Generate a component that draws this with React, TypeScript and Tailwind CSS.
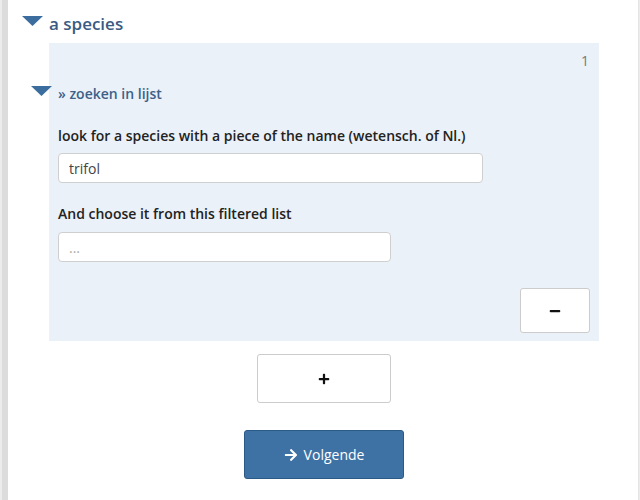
import { FaArrowRight, FaMinus, FaPlus } from "react-icons/fa"

const font = { fontFamily: '"Open Sans", "Liberation Sans", sans-serif' }

function Caret({ className }: { className: string }) {
  return (
    <svg viewBox="0 0 21 10" className={className}>
      <polygon points="0,0 21,0 10.5,10" fill="#3b6d9e" />
    </svg>
  )
}

export default function App() {
  return (
    <div className="h-[500px] w-[640px] overflow-hidden bg-[#ececec] pl-[2px]" style={font}>
      <div className="h-full border-l-[6px] border-r border-[#dcdcdc] border-r-[#e4e4e4] bg-white mr-[1px]">
        <div className="flex items-start gap-[6px] pl-[14px] pt-[16px]">
          <Caret className="h-[10px] w-[21px]" />
          <h2 className="-mt-[4px] text-[17px] font-semibold leading-[24px] text-[#3a5b82]">a species</h2>
        </div>

        <div className="ml-[41px] mt-[7px] h-[298px] w-[550px] bg-[#ebf1f8] pl-[9px] pr-[9px] pt-[8px]">
          <div className="flex justify-end pr-[1px] text-[14px] leading-[20px] text-[#777]">1</div>

          <div className="-ml-[27px] mt-[15px] flex items-start gap-[6px]">
            <Caret className="h-[10px] w-[21px]" />
            <span className="mt-[-2px] text-[14px] font-semibold leading-[20px] text-[#3b6189]">» zoeken in lijst</span>
          </div>

          <label className="mt-[22px] block text-[14px] font-semibold leading-[20px] text-[#222]">
            look for a species with a piece of the name (wetensch. of Nl.)
          </label>
          <input
            readOnly
            value="trifol"
            className="mt-[7px] block h-[30px] w-[425px] rounded-[4px] border border-[#cfcfcf] bg-white px-[10px] text-[14px] text-[#444] outline-none"
            style={font}
          />

          <label className="mt-[21px] block text-[14px] font-semibold leading-[20px] text-[#222]">
            And choose it from this filtered list
          </label>
          <input
            readOnly
            placeholder="..."
            className="mt-[8px] block h-[30px] w-[333px] rounded-[4px] border border-[#cfcfcf] bg-white px-[10px] text-[14px] text-[#444] outline-none placeholder:text-[#aaa]"
            style={font}
          />

          <div className="mt-[26px] flex justify-end">
            <button className="flex h-[45px] w-[70px] items-center justify-center rounded-[3px] border border-[#cccccc] bg-white text-[#111]">
              <FaMinus className="h-[12px] w-[12px]" />
            </button>
          </div>
        </div>

        <div className="ml-[41px] flex w-[550px] flex-col items-center">
          <button className="mt-[13px] flex h-[49px] w-[134px] items-center justify-center rounded-[3px] border border-[#cccccc] bg-white text-[#111]">
            <FaPlus className="h-[12px] w-[12px]" />
          </button>
          <button
            className="mt-[27px] flex h-[49px] w-[160px] items-center justify-center gap-[6px] rounded-[3px] border border-[#2c5a86] bg-[#3e72a5] text-[14px] text-white"
            style={font}
          >
            <FaArrowRight className="h-[14px] w-[14px]" />
            Volgende
          </button>
        </div>
      </div>
    </div>
  )
}
